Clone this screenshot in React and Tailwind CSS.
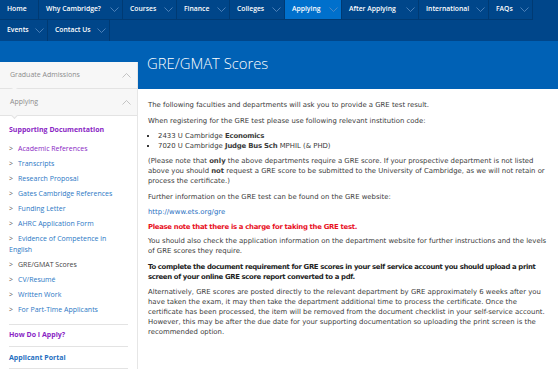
import React from 'react';

const NAV_ROW_1 = [
  { label: 'Home', w: 'w-[39px]', chevron: false },
  { label: 'Why Cambridge?', w: 'w-[84px]', chevron: true },
  { label: 'Courses', w: 'w-[54px]', chevron: true },
  { label: 'Finance', w: 'w-[53px]', chevron: true },
  { label: 'Colleges', w: 'w-[55px]', chevron: true },
  { label: 'Applying', w: 'w-[57px]', chevron: true, active: true },
  { label: 'After Applying', w: 'w-[77px]', chevron: true },
  { label: 'International', w: 'w-[70px]', chevron: true },
  { label: 'FAQs', w: 'w-[44px]', chevron: true },
];

const NAV_ROW_2 = [
  { label: 'Events', w: 'w-[48px]', chevron: true },
  { label: 'Contact Us', w: 'w-[62px]', chevron: true },
];

const SIDE_LINKS = [
  { label: 'Academic References', tone: 'visited' },
  { label: 'Transcripts' },
  { label: 'Research Proposal' },
  { label: 'Gates Cambridge References' },
  { label: 'Funding Letter' },
  { label: 'AHRC Application Form' },
  { label: 'Evidence of Competence in English' },
  { label: 'GRE/GMAT Scores', tone: 'current' },
  { label: 'CV/Resumé' },
  { label: 'Written Work' },
  { label: 'For Part-Time Applicants' },
];

function ChevronDown() {
  return (
    <svg width="9" height="5" viewBox="0 0 9 5" className="shrink-0">
      <polyline points="0.5,0.5 4.5,4.5 8.5,0.5" fill="none" stroke="#5f8fc4" strokeWidth="0.8" />
    </svg>
  );
}

function ChevronUp() {
  return (
    <svg width="9" height="5" viewBox="0 0 9 5" className="shrink-0">
      <polyline points="0.5,4.5 4.5,0.5 8.5,4.5" fill="none" stroke="#b5b5b5" strokeWidth="0.8" />
    </svg>
  );
}

function NavItem({ label, w, chevron, active }) {
  return (
    <div
      className={`${w} h-full flex items-center justify-between pl-[7px] pr-[3px] border-r border-[#003a73] ${
        active ? 'bg-[#0070cc]' : ''
      }`}
    >
      <span className="text-[6.8px] font-semibold text-white whitespace-nowrap">{label}</span>
      {chevron && <ChevronDown />}
    </div>
  );
}

function SideHeader({ label }) {
  return (
    <div className="relative h-[27px] flex items-center justify-between pl-[10px] pr-[6px] bg-[#f7f7f7] border-b border-[#e3e3e3]">
      <span className="text-[7px] text-[#8c8c8c]">{label}</span>
      <ChevronUp />
      <span className="absolute left-[12px] -bottom-[3px] w-[5px] h-[5px] rotate-45 bg-[#f7f7f7] border-r border-b border-[#e3e3e3]" />
    </div>
  );
}

export default function App() {
  return (
    <div className="w-[558px] h-[369px] overflow-hidden bg-white" style={{ fontFamily: '"Open Sans", sans-serif' }}>
      {/* Top navigation */}
      <nav className="bg-[#00468a]">
        <div className="h-[20px] flex border-b border-[#003a73] w-[533px]">
          {NAV_ROW_1.map((item) => (
            <NavItem key={item.label} {...item} />
          ))}
        </div>
        <div className="h-[21px] flex">
          {NAV_ROW_2.map((item) => (
            <NavItem key={item.label} {...item} />
          ))}
        </div>
      </nav>

      {/* Banner */}
      <div className="h-[48px] bg-[#0061b5] pl-[147px] pt-[11px]">
        <h1 className="text-[14.8px] font-light text-white leading-[22px]">GRE/GMAT Scores</h1>
      </div>

      <div className="flex">
        {/* Sidebar */}
        <aside className="relative z-10 w-[138px] -mt-[27px] bg-white border-r border-[#e6e6e6] shrink-0">
          <SideHeader label="Graduate Admissions" />
          <SideHeader label="Applying" />
          <div className="px-[9px] pt-[9px] text-[7px] leading-[10px]">
            <div className="font-bold text-[#8a1fc4]">Supporting Documentation</div>
            <ul className="mt-[9px] flex flex-col gap-[5px]">
              {SIDE_LINKS.map(({ label, tone }) => (
                <li key={label} className="flex">
                  <span className="w-[9px] shrink-0 text-[#555]">&gt;</span>
                  <span
                    className={
                      tone === 'visited'
                        ? 'text-[#8a1fc4]'
                        : tone === 'current'
                        ? 'text-[#444]'
                        : 'text-[#2b78c5]'
                    }
                  >
                    {label === 'Evidence of Competence in English' ? (
                      <>
                        Evidence of Competence in
                        <br />
                        <span className="-ml-[9px] leading-[11px]">English</span>
                      </>
                    ) : (
                      label
                    )}
                  </span>
                </li>
              ))}
            </ul>
            <div className="mt-[9px] border-t border-[#e3e3e3] pt-[5px] pb-[6px] font-bold text-[#8a1fc4]">How Do I Apply?</div>
            <div className="border-t border-b border-[#e3e3e3] pt-[6px] pb-[5px] font-bold text-[#1f6fbf]">Applicant Portal</div>
          </div>
        </aside>

        {/* Main content */}
        <main
          className="flex-1 pl-[10px] pr-[2px] pt-[11px] text-[6.9px] leading-[10px] text-[#3a3a3a] whitespace-nowrap"
          style={{ fontFamily: '"DejaVu Sans", Verdana, sans-serif' }}
        >
          <p className="mb-[6px]">
            The following faculties and departments will ask you to provide a GRE test result.
          </p>
          <p className="mb-[5px]">When registering for the GRE test please use following relevant institution code:</p>
          <ul className="mb-[5px] pl-[10px] list-[square]">
            <li>
              2433 U Cambridge <b className="tracking-[-0.2px]">Economics</b>
            </li>
            <li>
              7020 U Cambridge <b className="tracking-[-0.2px]">Judge Bus Sch</b> MPHIL (&amp; PHD)
            </li>
          </ul>
          <p className="mb-[6px]">
            (Please note that <b>only</b> the above departments require a GRE score. If your prospective department is
            not listed
            <br />
            above you should <b>not</b> request a GRE score to be submitted to the University of Cambridge, as we will
            not retain or
            <br />
            process the certificate.)
          </p>
          <p className="mb-[5px]">Further information on the GRE test can be found on the GRE website:</p>
          <p className="mb-[5px]">
            <span className="text-[#1f6fbf]">http://www.ets.org/gre</span>
          </p>
          <p className="mb-[4px] font-bold text-[#e8101e] tracking-[-0.3px]">
            Please note that there is a charge for taking the GRE test.
          </p>
          <p className="mb-[6px]">
            You should also check the application information on the department website for further instructions and
            the levels
            <br />
            of GRE scores they require.
          </p>
          <p className="mb-[5px] font-bold text-[#222] tracking-[-0.35px]">
            To complete the document requirement for GRE scores in your self service account you should upload a print
            <br />
            screen of your online GRE score report converted to a pdf.
          </p>
          <p>
            Alternatively, GRE scores are posted directly to the relevant department by GRE approximately 6 weeks after
            you
            <br />
            have taken the exam, it may then take the department additional time to process the certificate. Once the
            <br />
            certificate has been processed, the item will be removed from the document checklist in your self-service
            account.
            <br />
            However, this may be after the due date for your supporting documentation so uploading the print screen is
            the
            <br />
            recommended option.
          </p>
        </main>
      </div>
    </div>
  );
}
